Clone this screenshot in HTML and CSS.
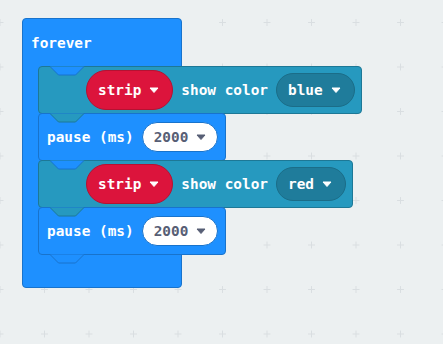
FILE: index.html
```html
<!DOCTYPE html>
<html lang="en">
<head>
  <meta charset="UTF-8">
  <meta name="viewport" content="width=device-width, initial-scale=1.0">
  <title>forever</title>
  <link rel="stylesheet" href="styles.css">
</head>
<body>
  <div class="workspace">
    <svg class="grid" width="443" height="344">
      <defs>
        <pattern id="dots" width="44.5" height="44.5" x="-22.25" y="0.25" patternUnits="userSpaceOnUse">
          <path d="M18.75 22.25 H25.75 M22.25 18.75 V25.75" stroke="#d9dee1" stroke-width="1" fill="none"/>
        </pattern>
      </defs>
      <rect width="443" height="344" fill="url(#dots)"/>
    </svg>

    <div class="forever">
      <div class="forever-head">
        <span class="label">forever</span>
        <svg class="tab" width="36" height="10"><path d="M0 0.5 L8.5 9 H25.5 L34 0.5" fill="#1e90ff" stroke="#1873cc"/></svg>
      </div>

      <div class="stack">
        <!-- strip show color blue -->
        <div class="block neo">
          <span class="pill var">strip <svg class="arrow" width="10" height="7"><path d="M1 1 H9 L5 5.5 Z" fill="#fff" stroke="#fff" stroke-linejoin="round"/></svg></span>
          <span class="label">show color</span>
          <span class="pill drop">blue <svg class="arrow" width="10" height="7"><path d="M1 1 H9 L5 5.5 Z" fill="#fff" stroke="#fff" stroke-linejoin="round"/></svg></span>
          <svg class="tab" width="36" height="10"><path d="M0 0.5 L8.5 9 H25.5 L34 0.5" fill="#2699bf" stroke="#1d7896"/></svg>
        </div>

        <!-- pause 2000 -->
        <div class="block loop">
          <span class="label">pause (ms)</span>
          <span class="pill num">2000 <svg class="arrow" width="10" height="7"><path d="M1 1 H9 L5 5.5 Z" fill="#575e75" stroke="#575e75" stroke-linejoin="round"/></svg></span>
          <svg class="tab" width="36" height="10"><path d="M0 0.5 L8.5 9 H25.5 L34 0.5" fill="#1e90ff" stroke="#1873cc"/></svg>
        </div>

        <!-- strip show color red -->
        <div class="block neo">
          <span class="pill var">strip <svg class="arrow" width="10" height="7"><path d="M1 1 H9 L5 5.5 Z" fill="#fff" stroke="#fff" stroke-linejoin="round"/></svg></span>
          <span class="label">show color</span>
          <span class="pill drop">red <svg class="arrow" width="10" height="7"><path d="M1 1 H9 L5 5.5 Z" fill="#fff" stroke="#fff" stroke-linejoin="round"/></svg></span>
          <svg class="tab" width="36" height="10"><path d="M0 0.5 L8.5 9 H25.5 L34 0.5" fill="#2699bf" stroke="#1d7896"/></svg>
        </div>

        <!-- pause 2000 -->
        <div class="block loop">
          <span class="label">pause (ms)</span>
          <span class="pill num">2000 <svg class="arrow" width="10" height="7"><path d="M1 1 H9 L5 5.5 Z" fill="#575e75" stroke="#575e75" stroke-linejoin="round"/></svg></span>
          <svg class="tab" width="36" height="10"><path d="M0 0.5 L8.5 9 H25.5 L34 0.5" fill="#1e90ff" stroke="#1873cc"/></svg>
        </div>
      </div>

      <div class="forever-foot"></div>
    </div>
  </div>
</body>
</html>
```

FILE: styles.css
```css
/* General Reset */
* {
  box-sizing: border-box;
  margin: 0;
  padding: 0;
}

body {
  font-family: "DejaVu Sans Mono", "Liberation Mono", monospace;
  font-weight: bold;
  font-size: 14.4px;
  background: #ecf0f1;
  overflow: hidden;
}

.workspace {
  position: relative;
  width: 443px;
  height: 344px;
  background: #ecf0f1;
  padding: 18px 0 0 22px;
}

.grid {
  position: absolute;
  top: 0;
  left: 0;
}

.label {
  color: #fff;
  white-space: nowrap;
}

/* forever container */
.forever {
  position: relative;
  width: 160px;
  background: #1e90ff;
  border: 1px solid #1873cc;
  border-radius: 4px;
}

.forever-head {
  position: relative;
  height: 47px;
  display: flex;
  align-items: center;
  padding-left: 8px;
}

.forever-head .tab {
  left: 27px;
  top: 100%;
}

.forever-foot {
  height: 32px;
}

.stack {
  display: flex;
  flex-direction: column;
  align-items: flex-start;
  margin-left: 15px;
}

/* statement blocks */
.block {
  position: relative;
  display: flex;
  align-items: center;
  gap: 8px;
  width: max-content;
  height: 48px;
  border: 1px solid;
  border-radius: 4px;
  padding: 0 6px 0 8px;
}

.block + .block {
  margin-top: -1px;
}

.block.neo {
  background: #2699bf;
  border-color: #1d7896;
  padding-left: 47px;
}

.block.loop {
  background: #1e90ff;
  border-color: #1873cc;
  padding-right: 7px;
}

.tab {
  position: absolute;
  left: 11px;
  top: calc(100% - 0.5px);
  z-index: 1;
}

/* fields */
.pill {
  display: flex;
  align-items: center;
  gap: 8px;
  white-space: nowrap;
  border: 1px solid;
}

.pill.var {
  height: 40px;
  border-radius: 20px;
  padding: 0 13px 0 11px;
  background: #dc143c;
  border-color: #b41232;
  color: #fff;
}

.pill.drop {
  height: 34px;
  border-radius: 17px;
  padding: 0 13px 0 11px;
  background: #1f7c9b;
  border-color: #1b6d88;
  color: #fff;
}

.pill.num {
  height: 30px;
  border-radius: 15px;
  padding: 0 11px 0 11px;
  background: #fff;
  border-color: #1873cc;
  color: #575e75;
}

.arrow {
  display: block;
}
```
